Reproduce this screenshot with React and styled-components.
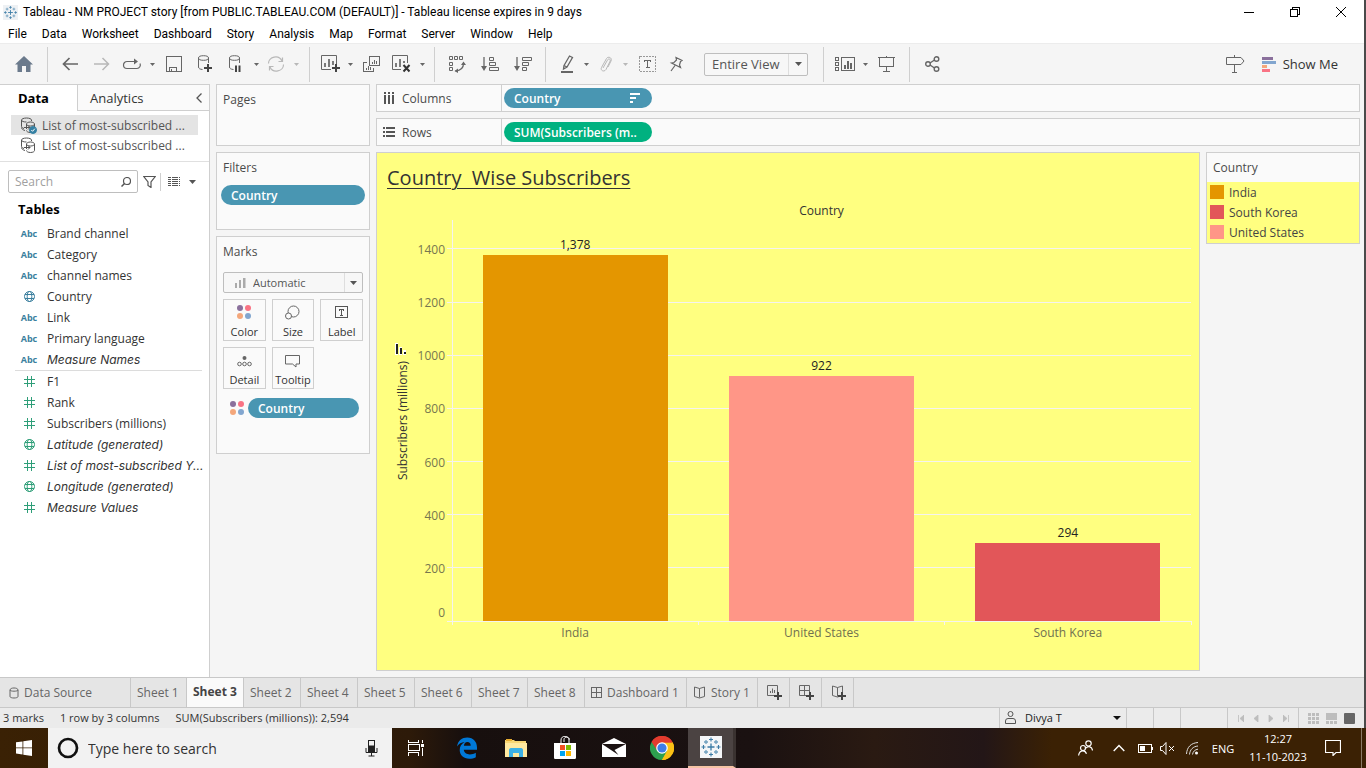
import React from "react";
import styled, { createGlobalStyle, css } from "styled-components";

const GlobalStyle = createGlobalStyle`
  *, *::before, *::after { box-sizing: border-box; }
  body { margin: 0; background: #f5f5f5; font-family: "Open Sans", "Noto Sans", sans-serif; font-size: 12px; color: #333; }
  button, input, select { font: inherit; color: inherit; margin: 0; padding: 0; border: 0; background: none; }
  ul { list-style: none; margin: 0; padding: 0; }
  h1, h2, h3 { margin: 0; font-weight: 400; font-size: inherit; }
`;

/* ---------- shell ---------- */
const Screen = styled.div`
  display: flex;
  flex-direction: column;
  min-height: 100vh;
`;
const AppWindow = styled.div`
  flex: 1;
  display: flex;
  flex-direction: column;
  border-right: 2px solid #4a4a4a;
  background: #f5f5f5;
`;
const TitleBar = styled.header`
  display: flex;
  align-items: center;
  height: 24px;
  padding-left: 3px;
  background: #fff;
  color: #000;
`;
const WindowTitle = styled.h1`
  flex: 1;
  padding-left: 5px;
  font-family: Roboto, sans-serif;
  font-size: 12px;
  line-height: 24px;
`;
const WindowButton = styled.button`
  width: 46px;
  height: 20px;
  display: flex;
  align-items: center;
  justify-content: center;
`;
const MenuBar = styled.nav`
  display: flex;
  height: 19px;
  padding-left: 8px;
  gap: 15px;
  background: #fff;
  color: #000;
`;
const MenuItem = styled.button`
  font-family: Roboto, sans-serif;
  font-size: 12px;
  line-height: 18px;
`;

/* ---------- toolbar ---------- */
const ToolBar = styled.div`
  display: flex;
  align-items: center;
  height: 41px;
  border-top: 1px solid #ececec;
  background: #f5f5f5;
  color: #666;
`;
const ToolButton = styled.button`
  width: ${(p) => p.$w}px;
  height: 36px;
  display: flex;
  align-items: center;
  justify-content: center;
  color: ${(p) => (p.$faded ? "#b8b8b8" : "#666")};
`;
const ToolDivider = styled.div`
  width: 1px;
  height: 35px;
  margin: 0 6px;
  background: #cfcfcf;
`;
const Combo = styled.div`
  display: flex;
  width: ${(p) => p.$w};
  height: ${(p) => p.$h}px;
  margin: ${(p) => p.$m || 0};
  border: 1px solid #bebebe;
  border-radius: 2px;
  background: #f7f7f7;
  align-items: stretch;
`;
const ComboSelect = styled.select`
  appearance: none;
  flex: 1;
  min-width: 0;
  padding-left: 7px;
  font-size: ${(p) => p.$size}px;
  color: #555;
`;
const ComboArrow = styled.span`
  width: ${(p) => p.$w}px;
  display: flex;
  align-items: center;
  justify-content: center;
  border-left: 1px solid #dedede;
  color: #555;
`;
const ComboLead = styled.span`
  display: flex;
  align-items: center;
  padding-left: 11px;
`;
const Spacer = styled.div`
  flex: 1;
`;
const ShowMe = styled.button`
  display: flex;
  align-items: center;
  gap: 6px;
  margin: 0 26px 0 12px;
  font-size: 13px;
  color: #333;
`;

/* ---------- workspace ---------- */
const Workspace = styled.div`
  flex: 1;
  display: flex;
  gap: 6px;
`;
const DataPane = styled.aside`
  width: 210px;
  display: flex;
  flex-direction: column;
  border-top: 1px solid #cfcfcf;
  border-right: 1px solid #cfcfcf;
  background: #fff;
`;
const PaneTabs = styled.div`
  display: flex;
  height: 26px;
`;
const PaneTab = styled.button`
  width: ${(p) => (p.$active ? 78 : 110)}px;
  flex: ${(p) => (p.$active ? "none" : 1)};
  padding-left: ${(p) => (p.$active ? 18 : 12)}px;
  text-align: left;
  font-size: 13px;
  line-height: 24px;
  font-weight: ${(p) => (p.$active ? 700 : 400)};
  color: ${(p) => (p.$active ? "#000" : "#333")};
  ${(p) =>
    p.$active
      ? css`
          border-right: 1px solid #cfcfcf;
        `
      : css`
          border-bottom: 1px solid #cfcfcf;
          background: #fafafa;
        `}
`;
const PaneCollapse = styled.button`
  width: 21px;
  display: flex;
  align-items: center;
  justify-content: center;
  border-bottom: 1px solid #cfcfcf;
  background: #fafafa;
  color: #555;
`;
const SourceList = styled.ul`
  padding: 4px 11px 6px;
  border-bottom: 1px solid #e0e0e0;
`;
const SourceItem = styled.li`
  display: flex;
  align-items: center;
  gap: 5px;
  height: 20px;
  padding-left: 9px;
  color: #555;
  background: ${(p) => (p.$active ? "#e4e4e4" : "transparent")};
`;
const SearchRow = styled.div`
  display: flex;
  align-items: center;
  margin: 8px 0 0 8px;
  color: #555;
`;
const SearchBox = styled.label`
  display: flex;
  align-items: center;
  width: 130px;
  height: 23px;
  padding: 0 6px;
  border: 1px solid #bebebe;
  border-radius: 2px;
`;
const SearchInput = styled.input`
  flex: 1;
  min-width: 0;
  outline: 0;
  &::placeholder {
    color: #a0a0a0;
    opacity: 1;
  }
`;
const SmallButton = styled.button`
  width: ${(p) => p.$w}px;
  height: 20px;
  display: flex;
  align-items: center;
  justify-content: center;
`;
const SearchDivider = styled.div`
  width: 1px;
  height: 18px;
  background: #cfcfcf;
`;
const TablesHeading = styled.h2`
  margin: 6px 0 4px 18px;
  font-size: 13px;
  line-height: 20px;
  font-weight: 700;
  color: #000;
`;
const FieldList = styled.ul`
  margin: 0 7px 0 15px;
  & + & {
    border-top: 1px solid #dcdcdc;
  }
`;
const Field = styled.li`
  display: flex;
  align-items: center;
  height: 21px;
  white-space: nowrap;
  ${(p) =>
    p.$italic &&
    css`
      font-family: Inter, "Open Sans", sans-serif;
      font-style: italic;
    `}
`;
const FieldType = styled.span`
  flex: none;
  width: 28px;
  margin-right: 4px;
  display: flex;
  align-items: center;
  justify-content: center;
  font-family: "Open Sans", sans-serif;
  font-size: 9px;
  font-weight: 700;
  font-style: normal;
  color: ${(p) => (p.$measure ? "#2e9e78" : "#3b7f9e")};
`;

const Cards = styled.div`
  width: 154px;
  display: flex;
  flex-direction: column;
  gap: 6px;
`;
const Card = styled.section`
  min-height: ${(p) => p.$h}px;
  border: 1px solid #cfcfcf;
  background: #fafafa;
`;
const CardTitle = styled.h2`
  padding: 5px 6px 4px;
  line-height: 20px;
  color: #4a4a4a;
`;
const Pill = styled.button`
  display: flex;
  align-items: center;
  justify-content: space-between;
  width: ${(p) => p.$w};
  height: 20px;
  margin: ${(p) => p.$m || 0};
  padding: 0 10px;
  border-radius: 10px;
  background: ${(p) => p.$color};
  color: #fff;
  font-weight: 600;
  white-space: nowrap;
`;
const MarkGrid = styled.div`
  display: grid;
  grid-template-columns: repeat(3, 1fr);
  gap: 6px;
  margin: 6px;
`;
const MarkButton = styled.button`
  height: 42px;
  display: flex;
  flex-direction: column;
  align-items: center;
  justify-content: space-between;
  padding: 5px 0 0;
  border: 1px solid #cfcfcf;
  color: #333;
  font-size: 11px;
  line-height: 16px;
`;
const EncodingRow = styled.div`
  display: flex;
  align-items: center;
  gap: 3px;
  padding: 3px 10px 0 13px;
`;

const Main = styled.main`
  flex: 1;
  display: flex;
  flex-direction: column;
  gap: 6px;
  padding: 0 4px 6px 0;
`;
const Shelf = styled.section`
  display: flex;
  align-items: center;
  height: 28px;
  border: 1px solid #cfcfcf;
  background: #fafafa;
`;
const ShelfLabel = styled.h2`
  display: flex;
  align-items: center;
  gap: 6px;
  width: 125px;
  height: 26px;
  padding-left: 6px;
  margin-right: 2px;
  border-right: 1px solid #cfcfcf;
  color: #4a4a4a;
`;
const Canvas = styled.div`
  flex: 1;
  display: flex;
  gap: 6px;
  align-items: stretch;
`;
const Viz = styled.section`
  flex: 1;
  display: flex;
  flex-direction: column;
  border: 1px solid #cfcfcf;
  background: #ffff80;
`;
const VizTitle = styled.h2`
  padding: 11px 10px 0;
  font-size: 20px;
  line-height: 28px;
  color: #333;
  text-decoration: underline;
  text-decoration-thickness: 1px;
  text-underline-offset: 3px;
  white-space: pre;
`;
const VizHeader = styled.div`
  margin: 10px 8px 0 75px;
  text-align: center;
  line-height: 18px;
  color: #333;
`;
const ChartRow = styled.div`
  flex: 1;
  display: flex;
  margin: 0 8px 49px 0;
`;
const AxisTitle = styled.div`
  width: 75px;
  padding-left: 17px;
  display: flex;
  flex-direction: column;
  justify-content: center;
  gap: 6px;
`;
const AxisTitleText = styled.span`
  margin-bottom: 18px;
  line-height: 18px;
  writing-mode: vertical-rl;
  transform: rotate(180deg);
  width: 18px;
  color: #333;
`;
const Plot = styled.svg`
  flex: 1;
  min-width: 0;
  overflow: visible;
  font-size: 12px;
`;
const Legend = styled.section`
  width: 154px;
  align-self: flex-start;
  border: 1px solid #cfcfcf;
  background: #fafafa;
`;
const LegendList = styled.ul`
  padding: 0 3px 1px;
  background: #ffff80;
`;
const LegendItem = styled.li`
  display: flex;
  align-items: center;
  gap: 5px;
  height: 20px;
  color: #444;
`;
const Swatch = styled.span`
  width: 14px;
  height: 14px;
  background: ${(p) => p.$color};
`;

/* ---------- footer bars ---------- */
const SheetBar = styled.nav`
  display: flex;
  height: 31px;
  border-top: 1px solid #c8c8c8;
  border-bottom: 1px solid #c8c8c8;
  background: #e5e5e5;
`;
const SheetTab = styled.button`
  display: flex;
  align-items: center;
  justify-content: flex-start;
  gap: 5px;
  width: ${(p) => p.$w}px;
  padding-left: ${(p) => p.$lead || 6}px;
  border-right: 1px solid #c8c8c8;
  color: #666;
  white-space: nowrap;
  ${(p) =>
    p.$active &&
    css`
      padding-bottom: 2px;
      background: #fafafa;
      color: #444;
      font-weight: 700;
    `}
`;
const StatusBar = styled.footer`
  display: flex;
  align-items: stretch;
  height: 20px;
  padding-left: 3px;
  background: #ebebeb;
  font-size: 11px;
  line-height: 20px;
`;
const StatusText = styled.span`
  margin-right: 16px;
`;
const StatusCell = styled.div`
  display: flex;
  align-items: center;
  justify-content: space-around;
  width: ${(p) => p.$w}px;
  padding: 0 5px;
  border-left: 1px solid #c8c8c8;
  color: ${(p) => (p.$faded ? "#bdbdbd" : "#555")};
`;
const UserSelect = styled.select`
  appearance: none;
  flex: 1;
  padding-left: 9px;
  color: #222;
`;
const PlainButton = styled.button`
  display: flex;
`;

const TaskBar = styled.footer`
  display: flex;
  height: 40px;
  background: linear-gradient(90deg, #3a2104 0, #2d1a09 30%, #170f0e 34%, #1a1111 55%, #2a1a12 64%, #231617 72%, #3b2104 77%);
  color: #fff;
`;
const TaskButton = styled.button`
  width: ${(p) => p.$w || 49}px;
  display: flex;
  align-items: center;
  justify-content: center;
  ${(p) =>
    p.$active &&
    css`
      background: #4b4342;
      border-bottom: 2px solid #f5c3a4;
      border-right: 3px solid #3a3230;
    `}
`;
const TaskSearch = styled.label`
  display: flex;
  align-items: center;
  width: 344px;
  padding: 0 14px 0 9px;
  background: #f2f2f2;
`;
const TaskSearchInput = styled.input`
  flex: 1;
  min-width: 0;
  padding-left: 9px;
  font-size: 14px;
  outline: 0;
  &::placeholder {
    color: #333;
    opacity: 1;
  }
`;
const Clock = styled.time`
  width: 76px;
  font-size: 11px;
  line-height: 18px;
  padding-top: 2px;
  text-align: center;
`;
const Language = styled.button`
  width: 34px;
  margin-left: 2px;
  font-size: 11px;
`;
const DesktopEdge = styled.div`
  width: 5px;
  margin-left: 11px;
  border-left: 1px solid #8a7a66;
`;

/* ---------- drawings ---------- */
const Icon = ({ w, h, crisp, children, ...rest }) => (
  <svg
    width={w}
    height={h}
    viewBox={`0 0 ${w} ${h}`}
    fill="none"
    stroke="currentColor"
    shapeRendering={crisp ? "crispEdges" : "auto"}
    aria-hidden="true"
    {...rest}
  >
    {children}
  </svg>
);
const Caret = ({ w = 5, color = "currentColor" }) => (
  <Icon w={w} h={Math.ceil(w / 2)} stroke="none">
    <path d={`M0 0H${w}L${w / 2} ${Math.ceil(w / 2)}Z`} fill={color} />
  </Icon>
);
const TableauMark = ({ size, bg }) => (
  <svg width={size} height={size} viewBox="0 0 22 22" aria-hidden="true">
    <rect width="22" height="22" fill={bg} />
    <g stroke="#3b7ba5" fill="none" strokeWidth="1.3">
      <path d="M11 7.500v7M7.500 11h7" />
      <path strokeWidth="1.1" d="M11 1.500v4M9 3.500h4M11 16.500v4M9 18.500h4M3.500 9v4M1.500 11h4M18.500 9v4M16.500 11h4" />
      <path stroke="#6f9fbe" d="M6 4v4M4 6h4M16 4v4M14 6h4M6 14v4M4 16h4M16 14v4M14 16h4" />
    </g>
  </svg>
);
const FourDots = () => (
  <Icon w={15} h={15} stroke="none">
    <circle cx="3" cy="3" r="3" fill="#8a709c" />
    <circle cx="11" cy="3" r="3" fill="#f97384" />
    <circle cx="3" cy="11" r="3" fill="#f4a77b" />
    <circle cx="11" cy="11" r="3" fill="#82a6cf" />
  </Icon>
);
const Globe = () => (
  <Icon w={11} h={11}>
    <circle cx="5.500" cy="5.500" r="5" />
    <ellipse cx="5.500" cy="5.500" rx="2.300" ry="5" />
    <path d="M1 3.500h9M1 7.500h9" />
  </Icon>
);
const Hash = () => (
  <Icon w={11} h={11} crisp>
    <path d="M3.500 0v11M7.500 0v11M0 3.500h11M0 7.500h11" />
  </Icon>
);
const PlusBadge = ({ x, y }) => (
  <path d={`M${x} ${y - 4}v8M${x - 4} ${y}h8`} stroke="#444" strokeWidth="2" />
);
const DataSourceIcon = ({ checked }) => (
  <Icon w={17} h={17}>
    <path d="M4 11.500C2 11 1.500 10 1.500 9V3c0-1 2-2 5-2s5 1 5 2v1M1.500 3c0 1.300 2 2 5 2M5 13.500c-2-.5-3.500-1.500-3.500-3" />
    <path d="M6.500 12V7c0-1 1.500-2 4-2s4 1 4 2v6.500c0 1-1.500 2-4 2s-4-1-4-2M6.500 7c0 1.200 1.500 2 4 2s4-.8 4-2" />
    <path d="M4 10.500h6M8 8.500l2 2-2 2" />
    {checked && (
      <g>
        <circle cx="13" cy="13" r="3.500" fill="#3580a3" stroke="#3580a3" />
        <path d="M11.300 13l1.300 1.300 2.200-2.600" stroke="#fff" />
      </g>
    )}
  </Icon>
);
const Cylinder = () => (
  <g>
    <ellipse cx="6.500" cy="3" rx="5" ry="2.300" />
    <path d="M1.500 3v9c0 1.500 1.500 2.300 4 2.500M11.500 3v5" />
  </g>
);
const BookShape = () => <path d="M6.500 2.500v9M6.500 2.500L1.500 1v9.500l5 1.500 5-1.500V1z" />;

/* ---------- data ---------- */
const menus = ["File", "Data", "Worksheet", "Dashboard", "Story", "Analysis", "Map", "Format", "Server", "Window", "Help"];
const dimensions = [
  ["Abc", "Brand channel"],
  ["Abc", "Category"],
  ["Abc", "channel names"],
  ["globe", "Country"],
  ["Abc", "Link"],
  ["Abc", "Primary language"],
  ["Abc", "Measure Names", true],
];
const measures = [
  ["hash", "F1"],
  ["hash", "Rank"],
  ["hash", "Subscribers (millions)"],
  ["globe", "Latitude (generated)", true],
  ["hash", "List of most-subscribed Y...", true],
  ["globe", "Longitude (generated)", true],
  ["hash", "Measure Values", true],
];
const bars = [
  { name: "India", value: 1378, color: "#e49600" },
  { name: "United States", value: 922, color: "#ff9687" },
  { name: "South Korea", value: 294, color: "#e25659" },
];
const legend = [bars[0], bars[2], bars[1]];
const axisMax = 1509;
const ticks = [0, 200, 400, 600, 800, 1000, 1200, 1400];
const sheets = [
  ["Sheet 1", 56],
  ["Sheet 3", 57],
  ["Sheet 2", 57],
  ["Sheet 4", 57],
  ["Sheet 5", 57],
  ["Sheet 6", 57],
  ["Sheet 7", 56],
  ["Sheet 8", 57],
];
const blue = "#4996b2";
const green = "#00b180";

const typeGlyph = { Abc: "Abc", globe: <Globe />, hash: <Hash /> };
const Fields = ({ items, measure }) => (
  <FieldList>
    {items.map(([type, name, italic]) => (
      <Field key={name} $italic={italic}>
        <FieldType $measure={measure}>{typeGlyph[type]}</FieldType>
        {name}
      </Field>
    ))}
  </FieldList>
);

const BarChart = () => {
  const at = (v) => `${100 - (v / axisMax) * 100}%`;
  const band = 100 / bars.length;
  return (
    <Plot role="img" aria-label="Subscribers (millions) by country">
      <g stroke="#f5f3f0" shapeRendering="crispEdges">
        {ticks.map((t) => (
          <line key={t} x1="-5" x2="100%" y1={at(t)} y2={at(t)} />
        ))}
        <line x1="0" x2="0" y1="0" y2="100%" />
        {[0, 1, 2, 3].map((i) => (
          <svg key={i} x={`${i * band}%`} y="100%" overflow="visible">
            <line x1="0" x2="0" y1="0" y2="4" />
          </svg>
        ))}
      </g>
      <g fill="#77774f" textAnchor="end">
        {ticks.map((t) => (
          <text key={t} x="-7" y={at(t)} dy={t === 0 ? -4 : 5}>
            {t}
          </text>
        ))}
      </g>
      {bars.map((b, i) => (
        <g key={b.name} textAnchor="middle">
          <rect
            x={`${i * band + band * 0.125}%`}
            width={`${band * 0.75}%`}
            y={at(b.value)}
            height={`${(b.value / axisMax) * 100}%`}
            fill={b.color}
            shapeRendering="crispEdges"
          />
          <text x={`${(i + 0.5) * band}%`} y={at(b.value)} dy="-6" fill="#222">
            {b.value.toLocaleString("en-US")}
          </text>
          <text x={`${(i + 0.5) * band}%`} y="100%" dy="16" fill="#707050">
            {b.name}
          </text>
        </g>
      ))}
    </Plot>
  );
};

const TopToolBar = () => (
  <ToolBar>
    <ToolButton $w={41} aria-label="Home">
      <Icon w={24} h={16} stroke="none">
        <path d="M15 0L24 8.500H21.500V16H17V10H13V16H8.500V8.500H6Z" fill="#6b7a8c" />
      </Icon>
    </ToolButton>
    <ToolDivider />
    <ToolButton $w={32} aria-label="Back">
      <Icon w={16} h={14}><path d="M16 7H1.500M7.500 1l-6 6 6 6" strokeWidth="1.700" /></Icon>
    </ToolButton>
    <ToolButton $w={31} $faded aria-label="Forward">
      <Icon w={16} h={14}><path d="M0 7h14.500M8.500 1l6 6-6 6" strokeWidth="1.500" /></Icon>
    </ToolButton>
    <ToolButton $w={29} aria-label="Redo options">
      <Icon w={20} h={12}>
        <path d="M13 3.500H5a3.500 3.500 0 0 0 0 7h10a3.500 3.500 0 0 0 3-5" strokeWidth="1.200" />
        <path d="M12 .5l4 3-4 3z" fill="currentColor" stroke="none" />
      </Icon>
    </ToolButton>
    <ToolButton $w={12} aria-label="More redo options"><Caret /></ToolButton>
    <ToolButton $w={32} aria-label="Save">
      <Icon w={16} h={16} crisp><path d="M.5.5h15v15H.5zM3.500 15v-4h7v4M5.500 15v-2" /></Icon>
    </ToolButton>
    <ToolButton $w={30} aria-label="New data source">
      <Icon w={16} h={18}><Cylinder /><PlusBadge x={11} y={13} /></Icon>
    </ToolButton>
    <ToolButton $w={30} aria-label="Pause auto updates">
      <Icon w={14} h={18}><Cylinder /><path d="M8 10.500v6.500M11.500 10.500v6.500" stroke="#444" strokeWidth="2" /></Icon>
    </ToolButton>
    <ToolButton $w={12} aria-label="Auto update options"><Caret /></ToolButton>
    <ToolButton $w={28} $faded aria-label="Run update">
      <Icon w={18} h={16}>
        <path d="M1.500 7.500a7 6.500 0 0 1 13.500-2.500M16.500 8.500a7 6.500 0 0 1-13.500 2.500" strokeWidth="1.200" />
        <path d="M15.500 1.500v4H11.500M2.500 14.500v-4H6.500" strokeWidth="1.200" />
      </Icon>
    </ToolButton>
    <ToolButton $w={13} $faded aria-label="Run options"><Caret /></ToolButton>
    <ToolDivider />
    <ToolButton $w={28} aria-label="New worksheet">
      <Icon w={19} h={18}>
        <path d="M10 14.500H.5V.5h15V9" />
        <path d="M4 12V8M8 12V4M12 10V6" strokeWidth="1.700" />
        <PlusBadge x={15} y={13} />
      </Icon>
    </ToolButton>
    <ToolButton $w={12} aria-label="New sheet options"><Caret /></ToolButton>
    <ToolButton $w={30} aria-label="Duplicate">
      <Icon w={17} h={16} crisp>
        <path d="M6.500.5h10v9h-10zM4 6.500H.5v9h10V12M9.500 7.500v-2M11.500 7.500v-4M13.500 7.500v-3M3.500 13.500v-2M5.500 13.500v-4M7.500 13.500v-3" />
      </Icon>
    </ToolButton>
    <ToolButton $w={30} aria-label="Clear sheet">
      <Icon w={19} h={18}>
        <path d="M9 14.500H.5V.5h15V8" />
        <path d="M4 12V8M8 12V4M12 8V6" strokeWidth="1.700" />
        <path d="M11.500 10l6 6.500M17.500 10l-6 6.500" stroke="#333" strokeWidth="2" />
      </Icon>
    </ToolButton>
    <ToolButton $w={12} aria-label="Clear options"><Caret /></ToolButton>
    <ToolDivider />
    <ToolButton $w={32} aria-label="Swap rows and columns">
      <Icon w={17} h={17}>
        <path d="M.5.5h3v3h-3zM5.500.5h3v3h-3zM10.500.5h3v3h-3zM.5 6.500h3v3h-3zM.5 11.500h3v3h-3z" />
        <path d="M14.500 7.500c0 4-3 7-8 7.500" strokeWidth="1.300" />
        <path d="M12 9l2.500-3.500L17 9zM9 12.500L5.500 15 9 17z" fill="currentColor" stroke="none" />
      </Icon>
    </ToolButton>
    <ToolButton $w={33} aria-label="Sort ascending">
      <Icon w={18} h={15}>
        <path d="M3 0v10" strokeWidth="1.300" />
        <path d="M0 9h6l-3 5z" fill="currentColor" stroke="none" />
        <path d="M8.500.5h4v3h-4zM8.500 5.500h6v3h-6zM8.500 10.500h9v3h-9z" />
      </Icon>
    </ToolButton>
    <ToolButton $w={33} aria-label="Sort descending">
      <Icon w={18} h={15}>
        <path d="M3 0v10" strokeWidth="1.300" />
        <path d="M0 9h6l-3 5z" fill="currentColor" stroke="none" />
        <path d="M8.500.5h9v3h-9zM8.500 5.500h6v3h-6zM8.500 10.500h4v3h-4z" />
      </Icon>
    </ToolButton>
    <ToolDivider />
    <ToolButton $w={29} aria-label="Highlight">
      <Icon w={14} h={18}>
        <path d="M4 10.500L9.500 1l3 1.500L7 12l-3.500 2zM4 10.500L7 12" strokeWidth="1.300" />
        <path d="M1 17h12" strokeWidth="2" />
      </Icon>
    </ToolButton>
    <ToolButton $w={11} aria-label="Highlight options"><Caret /></ToolButton>
    <ToolButton $w={27} $faded aria-label="Group members">
      <Icon w={14} h={17}>
        <path d="M4 12l4.500-8c1-2 3.500-.8 2.700 1L7 13.500c-1.800 3-6 1-4.500-2L7.500 2.500C9 0 13.500 1.500 12 5L9 11" />
      </Icon>
    </ToolButton>
    <ToolButton $w={12} $faded aria-label="Group options"><Caret /></ToolButton>
    <ToolButton $w={33} aria-label="Show mark labels">
      <Icon w={17} h={16} crisp>
        <path d="M.5.5h16v15H.5z" strokeDasharray="2 1" stroke="#999" />
        <path d="M5.500 6V4.500h6V6M8.500 4.500v7M6.500 11.500h4" />
      </Icon>
    </ToolButton>
    <ToolButton $w={24} aria-label="Fix axes">
      <Icon w={14} h={16}>
        <path d="M7 1.500l6 3-1.500 1-1 3.500 1 2.500-9-4.500 2.500-.5L7.500 4zM6 9.500L2 15" strokeWidth="1.200" />
      </Icon>
    </ToolButton>
    <Combo $w="104px" $h={23} $m="0 9px 0 16px">
      <ComboSelect $size={13} aria-label="Fit"><option>Entire View</option></ComboSelect>
      <ComboArrow $w={19}><Caret w={7} /></ComboArrow>
    </Combo>
    <ToolDivider />
    <ToolButton $w={30} aria-label="Show or hide cards">
      <Icon w={20} h={15} crisp>
        <path d="M.5.5h3v3h-3zM.5 5.500h3v3h-3zM.5 10.500h3v3h-3zM6.500.5h13v13h-13z" />
        <path d="M10 12V8M13 12V4M16 12V6" strokeWidth="2" />
      </Icon>
    </ToolButton>
    <ToolButton $w={10} aria-label="Card options"><Caret /></ToolButton>
    <ToolButton $w={33} aria-label="Presentation mode">
      <Icon w={17} h={16} crisp>
        <path d="M0 1.500h17M1.500 2v8h14V2M8.500 0v1M8.500 10v5M5 15.500h7" />
      </Icon>
    </ToolButton>
    <ToolDivider />
    <ToolButton $w={33} aria-label="Share workbook">
      <Icon w={15} h={16} strokeWidth="1.400">
        <circle cx="3" cy="8" r="2.300" /><circle cx="11.500" cy="3" r="2.300" /><circle cx="11.500" cy="13" r="2.300" />
        <path d="M5 7l4.500-3M5 9l4.500 3" />
      </Icon>
    </ToolButton>
    <Spacer />
    <ToolButton $w={28} aria-label="Data guide">
      <Icon w={19} h={18}>
        <path d="M.5 2.500H15L18 6l-3 3.500H.5zM8.500 0v2.500M8.500 9.500v8M6 17.500h5" />
      </Icon>
    </ToolButton>
    <ShowMe>
      <Icon w={15} h={15} stroke="none" crisp>
        <path d="M0 0h11v3H0z" fill="#8a709c" /><path d="M0 4h14v3H0z" fill="#82a6cf" />
        <path d="M0 8h5v3H0z" fill="#f4a77b" /><path d="M0 12h8v3H0z" fill="#f97384" />
      </Icon>
      Show Me
    </ShowMe>
  </ToolBar>
);

const LeftPane = () => (
  <DataPane>
    <PaneTabs>
      <PaneTab $active>Data</PaneTab>
      <PaneTab>Analytics</PaneTab>
      <PaneCollapse aria-label="Collapse pane">
        <Icon w={6} h={10}><path d="M5.500.5L1 5l4.500 4.500" strokeWidth="1.300" /></Icon>
      </PaneCollapse>
    </PaneTabs>
    <SourceList>
      <SourceItem $active><DataSourceIcon checked />List of most-subscribed ...</SourceItem>
      <SourceItem><DataSourceIcon />List of most-subscribed ...</SourceItem>
    </SourceList>
    <SearchRow>
      <SearchBox>
        <SearchInput placeholder="Search" aria-label="Search fields" />
        <Icon w={10} h={10}><circle cx="6" cy="4" r="3.500" strokeWidth="1.200" /><path d="M3.500 6.500L.5 9.500" strokeWidth="1.500" /></Icon>
      </SearchBox>
      <SmallButton $w={22} aria-label="Filter fields">
        <Icon w={13} h={12}><path d="M.8.5h11.400L8 6v5.500L5 9.500V6z" strokeWidth="1.200" /></Icon>
      </SmallButton>
      <SearchDivider />
      <SmallButton $w={25} aria-label="View as">
        <Icon w={12} h={9} crisp>
          <path d="M0 .5h12M0 2.500h12M0 4.500h12M0 6.500h12M0 8.500h12" strokeDasharray="3 .5" />
        </Icon>
      </SmallButton>
      <SmallButton $w={13} aria-label="View options"><Caret w={7} /></SmallButton>
    </SearchRow>
    <TablesHeading>Tables</TablesHeading>
    <Fields items={dimensions} />
    <Fields items={measures} measure />
  </DataPane>
);

const MarksCard = () => (
  <Card $h={218}>
    <CardTitle>Marks</CardTitle>
    <Combo $w="140px" $h={21} $m="6px 6px 0">
      <ComboLead>
        <Icon w={11} h={10} stroke="none"><path d="M0 5h2v5H0zM4 2h2v8H4zM8 0h2.500v10H8z" fill="#aaa" /></Icon>
      </ComboLead>
      <ComboSelect $size={11} aria-label="Mark type"><option>Automatic</option></ComboSelect>
      <ComboArrow $w={18}><Caret w={7} /></ComboArrow>
    </Combo>
    <MarkGrid>
      <MarkButton><FourDots />Color</MarkButton>
      <MarkButton>
        <Icon w={15} h={15} stroke="#666"><circle cx="8.500" cy="6.500" r="5.500" /><circle cx="3.500" cy="11" r="3" fill="#fafafa" /></Icon>
        Size
      </MarkButton>
      <MarkButton>
        <Icon w={13} h={15} stroke="#555" crisp><path d="M.5 1.500h12v11H.5zM4.500 6V4.500h4V6M6.500 4.500v6M5 10.500h3" /></Icon>
        Label
      </MarkButton>
      <MarkButton>
        <Icon w={15} h={15} stroke="#666"><circle cx="7.500" cy="5" r="2" fill="#666" stroke="none" /><circle cx="2.500" cy="11" r="1.800" /><circle cx="7.500" cy="11" r="1.800" /><circle cx="12.500" cy="11" r="1.800" /></Icon>
        Detail
      </MarkButton>
      <MarkButton>
        <Icon w={15} h={15} stroke="#666"><path d="M.5 2.500h14v8.500h-3.500v3L7.500 11H.5z" /></Icon>
        Tooltip
      </MarkButton>
    </MarkGrid>
    <EncodingRow>
      <FourDots />
      <Pill $w="111px" $color={blue}>Country</Pill>
    </EncodingRow>
  </Card>
);

const VizArea = () => (
  <Main>
    <Shelf>
      <ShelfLabel>
        <Icon w={13} h={13} stroke="none" crisp>
          <path d="M1 0h2v2H1zM5 0h2v2H5zM9 0h2v2H9zM1 3h2v9H1zM5 3h2v9H5zM9 3h2v9H9z" fill="#555" />
        </Icon>
        Columns
      </ShelfLabel>
      <Pill $w="148px" $color={blue}>
        Country
        <Icon w={12} h={10} crisp><path d="M0 1h10M0 5h6M0 9h3" strokeWidth="2" /></Icon>
      </Pill>
    </Shelf>
    <Shelf>
      <ShelfLabel>
        <Icon w={13} h={13} stroke="none" crisp>
          <path d="M0 1h2v2H0zM3 1h9v2H3zM0 5h2v2H0zM3 5h9v2H3zM0 9h2v2H0zM3 9h9v2H3z" fill="#555" />
        </Icon>
        Rows
      </ShelfLabel>
      <Pill $w="148px" $color={green}>SUM(Subscribers (m..</Pill>
    </Shelf>
    <Canvas>
      <Viz>
        <VizTitle>{"Country  Wise Subscribers"}</VizTitle>
        <VizHeader>Country</VizHeader>
        <ChartRow>
          <AxisTitle>
            <Icon w={16} h={12} stroke="none" crisp>
              <path d="M1 0h3v12H1zM5 4h3v8H5zM9 7h3v5H9z" fill="#fff" />
              <path d="M2 1h2v10H2zM6 5h2v6H6zM10 9h2v2h-2z" fill="#222" />
            </Icon>
            <AxisTitleText>Subscribers (millions)</AxisTitleText>
          </AxisTitle>
          <BarChart />
        </ChartRow>
      </Viz>
      <Legend>
        <CardTitle>Country</CardTitle>
        <LegendList>
          {legend.map((b) => (
            <LegendItem key={b.name}><Swatch $color={b.color} />{b.name}</LegendItem>
          ))}
        </LegendList>
      </Legend>
    </Canvas>
  </Main>
);

const Sheets = () => (
  <SheetBar>
    <SheetTab $w={131} $lead={9}>
      <Icon w={10} h={12}><path d="M1 3v6.500c0 2 8 2 8 0V3c0-2.700-8-2.700-8 0c0 1.600 8 1.600 8 0" /></Icon>
      Data Source
    </SheetTab>
    {sheets.map(([name, w]) => (
      <SheetTab key={name} $w={w} $active={name === "Sheet 3"}>{name}</SheetTab>
    ))}
    <SheetTab $w={102}>
      <Icon w={11} h={11} crisp><path d="M.5.5h10v10H.5zM5.500 0v11M0 5.500h11" /></Icon>
      Dashboard 1
    </SheetTab>
    <SheetTab $w={71}><Icon w={13} h={13}><BookShape /></Icon>Story 1</SheetTab>
    <SheetTab $w={32} $lead={9} aria-label="New Worksheet">
      <Icon w={16} h={16}><path d="M8 10.500H.5V.5h10V7M3.500 8V6M5.500 8V3.500M7.500 8V5" /><PlusBadge x={11} y={11} /></Icon>
    </SheetTab>
    <SheetTab $w={32} $lead={9} aria-label="New Dashboard">
      <Icon w={16} h={16}><path d="M8 10.500H.5V.5h10V7M5.500 0v11M0 5.500h11" /><PlusBadge x={11} y={11} /></Icon>
    </SheetTab>
    <SheetTab $w={32} $lead={9} aria-label="New Story">
      <Icon w={16} h={16}><path d="M6.500 2.500v9M8 11.500L6.500 12l-5-1.500V1l5 1.500L11.500 1v6" /><PlusBadge x={11} y={11} /></Icon>
    </SheetTab>
  </SheetBar>
);

const Status = () => (
  <StatusBar>
    <StatusText>3 marks</StatusText>
    <StatusText>1 row by 3 columns</StatusText>
    <StatusText>SUM(Subscribers (millions)): 2,594</StatusText>
    <Spacer />
    <StatusCell $w={127}>
      <Icon w={11} h={14}><circle cx="5.500" cy="3" r="2.500" /><path d="M.5 12.500V10a2.500 2.500 0 0 1 2.500-2.500h5A2.500 2.500 0 0 1 10.500 10v2.500z" /></Icon>
      <UserSelect aria-label="User"><option>Divya T</option></UserSelect>
      <Caret w={8} color="#111" />
    </StatusCell>
    <StatusCell $w={27} />
    <StatusCell $w={27} />
    <StatusCell $w={47} />
    <StatusCell $w={71} $faded>
      {[
        ["First", "M.5 0v7M6 0v7L2 3.500z"],
        ["Previous", "M5 0v7L1 3.500z"],
        ["Next", "M1 0v7L5 3.500z"],
        ["Last", "M5.500 0v7M0 0v7L4 3.500z"],
      ].map(([name, d]) => (
        <PlainButton key={name} aria-label={name}>
          <Icon w={6} h={7}><path d={d} fill="currentColor" strokeWidth=".8" /></Icon>
        </PlainButton>
      ))}
    </StatusCell>
    <StatusCell $w={66} $faded>
      <PlainButton aria-label="Show tabs">
        <Icon w={11} h={11} stroke="none" crisp>
          <path d="M0 0h3v3H0zM4 0h3v3H4zM8 0h3v3H8zM0 4h3v3H0zM4 4h3v3H4zM8 4h3v3H8zM0 8h3v3H0zM4 8h3v3H4zM8 8h3v3H8z" fill="#bdbdbd" />
        </Icon>
      </PlainButton>
      <PlainButton aria-label="Show filmstrip">
        <Icon w={11} h={11} stroke="none" crisp><path d="M0 0h11v7H0zM0 8h3v3H0zM4 8h3v3H4zM8 8h3v3H8z" fill="#bdbdbd" /></Icon>
      </PlainButton>
      <PlainButton aria-label="Show sheet">
        <Icon w={11} h={11} stroke="none"><rect width="11" height="11" rx="1" fill="#666" /></Icon>
      </PlainButton>
    </StatusCell>
  </StatusBar>
);

const WindowsTaskBar = () => (
  <TaskBar>
    <TaskButton $w={48} aria-label="Start">
      <Icon w={16} h={16} stroke="none"><path d="M0 2.300L6.500 1.400V7.500H0zM7.300 1.300L16 0V7.500H7.300zM0 8.300H6.500V14.500L0 13.600zM7.300 8.300H16V16L7.300 14.700z" fill="#fff" /></Icon>
    </TaskButton>
    <TaskSearch>
      <Icon w={22} h={22} stroke="#111"><circle cx="11" cy="11" r="9" strokeWidth="2.700" /></Icon>
      <TaskSearchInput placeholder="Type here to search" aria-label="Search Windows" />
      <Icon w={13} h={17} stroke="#222">
        <rect x="3.500" y=".5" width="6" height="11" /><path d="M4 6h5v5H4z" fill="#222" /><path d="M1 8v4.500h11V8M6.500 13v3M3.500 16h6" />
      </Icon>
    </TaskSearch>
    <TaskButton $w={48} aria-label="Task view">
      <Icon w={17} h={16} stroke="#fff" crisp>
        <path d="M0 4.500h11v6H0zM.5 0v2.500h10V0M.5 16v-3.500h10V16M14.500 0v3M14.500 8v8" /><path d="M13 4h3v3h-3z" fill="#fff" stroke="none" />
      </Icon>
    </TaskButton>
    <TaskButton $w={54} aria-label="Edge">
      <Icon w={20} h={22} stroke="none">
        <path d="M0 9.500C1 3.500 5 .5 10.200.5 16.500.5 20 5 20 10.500v2.300H6.800c.2 3.200 3 4.600 6 4.600 2.300 0 4.300-.6 6-1.700v4.500c-1.900 1-4.200 1.500-6.500 1.500C6.500 21.700 2.700 18.200 2.700 13c0-3.600 1.800-6.400 5-8C4.500 5.200 1.700 6.800 0 9.500zM6.900 8.800h6.800c0-2.400-1.200-3.700-3.300-3.700-2 0-3.200 1.400-3.500 3.700z" fill="#0078d7" fillRule="evenodd" />
      </Icon>
    </TaskButton>
    <TaskButton $w={44} aria-label="File Explorer">
      <Icon w={22} h={19} stroke="none">
        <path d="M0 1h9l1 1h11v16H0z" fill="#f8d775" /><path d="M0 4h22v14H0z" fill="#ffe9a0" />
        <path d="M1 0h6v2H1z" fill="#e7ad31" /><path d="M4 18v-7c0-1 .6-2 2-2h10c1.400 0 2 1 2 2v7h-4v-4H8v4z" fill="#3cb1e6" />
      </Icon>
    </TaskButton>
    <TaskButton $w={54} aria-label="Microsoft Store">
      <Icon w={24} h={24} stroke="none">
        <path d="M8 8V4c0-5 8-5 8 0v4M11 6V3.500c0-3 5-3 5.500 0" stroke="#fff" fill="none" />
        <path d="M1 7h22v14.500c0 1-.8 1.500-1.500 1.500h-19C1.500 23 1 22.500 1 21.500z" fill="#fff" />
        <path d="M7 9h5v5H7z" fill="#f25022" /><path d="M13 9h5v5h-5z" fill="#7fba00" /><path d="M7 15h5v5H7z" fill="#00a4ef" /><path d="M13 15h5v5h-5z" fill="#ffb900" />
      </Icon>
    </TaskButton>
    <TaskButton $w={44} aria-label="Mail">
      <Icon w={24} h={20} stroke="none"><path d="M12 0l12 6v13H0V6z" fill="#fff" /><path d="M0 6h24L12.500 12l4 5z" fill="#1b1212" /></Icon>
    </TaskButton>
    <TaskButton $w={52} aria-label="Chrome">
      <Icon w={24} h={24} stroke="none">
        <path d="M12 12L1.600 6A12 12 0 0 1 22.400 6z" fill="#ea4335" />
        <path d="M12 12L22.400 6A12 12 0 0 1 12 24z" fill="#fbbc05" />
        <path d="M12 12L17.200 15 12 24A12 12 0 0 1 1.600 6z" fill="#2da04e" />
        <path d="M12 6.500h10.700A12 12 0 0 1 12 24l5-9z" fill="#fbc116" />
        <path d="M12 6.500h10.700A12 12 0 0 0 1.600 6l5.200 8z" fill="#e33b2e" />
        <circle cx="12" cy="12" r="5.800" fill="#fff" /><circle cx="12" cy="12" r="4.600" fill="#3f7de8" />
      </Icon>
    </TaskButton>
    <TaskButton $w={48} $active aria-label="Tableau"><TableauMark size={22} bg="#f4f6f8" /></TaskButton>
    <Spacer />
    <TaskButton $w={34} aria-label="People">
      <Icon w={15} h={16} stroke="#fff" strokeWidth="1.200">
        <circle cx="5" cy="8" r="2.500" /><path d="M.6 15.500c.4-3 2-4.700 4.400-4.700s3 1.500 3.500 3" /><circle cx="10.500" cy="3.500" r="2.700" /><path d="M8 8c2.500-2.500 6-1.500 6.500 2.500" />
      </Icon>
    </TaskButton>
    <TaskButton $w={34} aria-label="Show hidden icons">
      <Icon w={12} h={8} stroke="#fff"><path d="M.7 7L6 1.500 11.300 7" strokeWidth="1.400" /></Icon>
    </TaskButton>
    <TaskButton $w={18} aria-label="Battery">
      <Icon w={15} h={9} stroke="#fff" crisp><path d="M.5.5h13v8H.5zM14.500 3v3" /><path d="M2 2h5v5H2z" fill="#fff" stroke="none" /></Icon>
    </TaskButton>
    <TaskButton $w={26} aria-label="Volume muted">
      <Icon w={15} h={13} stroke="#fff"><path d="M.5 4.500h2l3.500-4v12l-3.500-4h-2zM9 4l5 5M14 4L9 9" /></Icon>
    </TaskButton>
    <TaskButton $w={24} aria-label="Network">
      <Icon w={13} h={13} stroke="#ddd"><path d="M.5 12C1 5 5 1 12 .5M3.500 12.500C4 7.500 7 4.500 12 4M6.500 12.500C7 9.500 9 7.500 12 7.200" /><circle cx="10.500" cy="11" r="1.500" fill="#fff" stroke="none" /></Icon>
    </TaskButton>
    <Language>ENG</Language>
    <Clock>12:27<br />11-10-2023</Clock>
    <TaskButton $w={34} aria-label="Notifications">
      <Icon w={16} h={16} stroke="#fff"><path d="M.5.5h15v12H11l-3 3v-3H.5z" strokeWidth="1.200" /></Icon>
    </TaskButton>
    <DesktopEdge />
  </TaskBar>
);

export default function App() {
  return (
    <Screen>
      <GlobalStyle />
      <AppWindow>
        <TitleBar>
          <TableauMark size={15} bg="#eef1f4" />
          <WindowTitle>Tableau - NM PROJECT story [from PUBLIC.TABLEAU.COM (DEFAULT)] - Tableau license expires in 9 days</WindowTitle>
          <WindowButton aria-label="Minimize"><Icon w={10} h={10} crisp><path d="M0 5.500h10" /></Icon></WindowButton>
          <WindowButton aria-label="Restore"><Icon w={10} h={10} crisp><path d="M.5 2.500h7v7h-7zM2.500 2V.5h7v7H8" /></Icon></WindowButton>
          <WindowButton aria-label="Close"><Icon w={10} h={10}><path d="M0 0l10 10M10 0L0 10" /></Icon></WindowButton>
        </TitleBar>
        <MenuBar>{menus.map((m) => <MenuItem key={m}>{m}</MenuItem>)}</MenuBar>
        <TopToolBar />
        <Workspace>
          <LeftPane />
          <Cards>
            <Card $h={62}><CardTitle>Pages</CardTitle></Card>
            <Card $h={78}>
              <CardTitle>Filters</CardTitle>
              <Pill $w="144px" $m="3px 4px" $color={blue}>Country</Pill>
            </Card>
            <MarksCard />
          </Cards>
          <VizArea />
        </Workspace>
        <Sheets />
        <Status />
      </AppWindow>
      <WindowsTaskBar />
    </Screen>
  );
}
